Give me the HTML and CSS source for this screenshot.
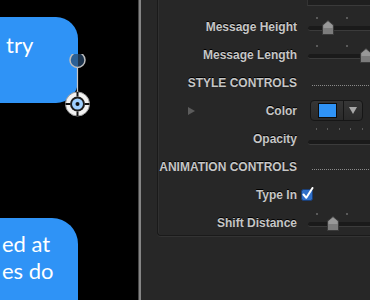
FILE: index.html
```html
<html lang="en">
<head>
  <meta charset="UTF-8">
  <title>Message Inspector</title>
  <link rel="stylesheet" href="styles.css">
</head>
<body>
  <div class="canvas">
    <div class="bubble bubble-top">
      <p>try</p>
    </div>
    <div class="bubble bubble-bottom">
      <p>ed at</p>
      <p>es do</p>
    </div>
    <svg class="handles" width="40" height="80" viewBox="0 0 40 80">
      <line x1="20.5" y1="14" x2="20.5" y2="40" stroke="#c8c8c8" stroke-width="1.2"/>
      <circle cx="20.5" cy="6" r="7.5" fill="#2a4a6e" fill-opacity="0.7" stroke="#bdbdbd" stroke-width="1.5"/>
      <circle cx="20.5" cy="50" r="12" fill="#f2f2f2" stroke="#9a9a9a" stroke-width="1"/>
      <circle cx="20.5" cy="50" r="7.5" fill="#1c1c1c"/>
      <circle cx="20.5" cy="50" r="5.5" fill="#9fd0ff"/>
      <circle cx="20.5" cy="50" r="2" fill="#111"/>
      <line x1="8.5" y1="50" x2="13" y2="50" stroke="#111" stroke-width="2"/>
      <line x1="28" y1="50" x2="32.5" y2="50" stroke="#111" stroke-width="2"/>
      <line x1="20.5" y1="38" x2="20.5" y2="42.5" stroke="#111" stroke-width="2"/>
      <line x1="20.5" y1="57.5" x2="20.5" y2="62" stroke="#111" stroke-width="2"/>
    </svg>
  </div>

  <div class="divider"></div>

  <div class="inspector">
    <div class="group">
      <div class="top-well"></div>

      <div class="row">
        <div class="label">Message Height</div>
        <div class="slider">
          <span class="tick" style="left: 15px"></span>
          <span class="tick" style="left: 45px"></span>
          <div class="track"></div>
          <svg class="thumb" style="left: 21px" width="12" height="15" viewBox="0 0 12 15"><path d="M6 0.5 L11.5 5 L11.5 14.5 L0.5 14.5 L0.5 5 Z" fill="#7c7c7c" stroke="#3a3a3a"/><path d="M6 1.5 L10.5 5.3 L10.5 8 L1.5 8 L1.5 5.3 Z" fill="#989898"/></svg>
        </div>
      </div>

      <div class="row">
        <div class="label">Message Length</div>
        <div class="slider">
          <span class="tick" style="left: 15px"></span>
          <span class="tick" style="left: 45px"></span>
          <div class="track"></div>
          <svg class="thumb" style="left: 59px" width="12" height="15" viewBox="0 0 12 15"><path d="M6 0.5 L11.5 5 L11.5 14.5 L0.5 14.5 L0.5 5 Z" fill="#7c7c7c" stroke="#3a3a3a"/><path d="M6 1.5 L10.5 5.3 L10.5 8 L1.5 8 L1.5 5.3 Z" fill="#989898"/></svg>
        </div>
      </div>

      <div class="row">
        <div class="label header">STYLE CONTROLS</div>
        <div class="dots"></div>
      </div>

      <div class="row">
        <div class="label"><span class="disclosure"></span>Color</div>
        <div class="color-control">
          <div class="well"><span class="swatch"></span></div>
          <div class="drop"><span class="arrow"></span></div>
        </div>
      </div>

      <div class="row">
        <div class="label">Opacity</div>
        <div class="slider">
          <span class="tick small" style="left: 15px"></span>
          <span class="tick small" style="left: 26px"></span>
          <span class="tick small" style="left: 38px"></span>
          <span class="tick small" style="left: 49px"></span>
          <span class="tick small" style="left: 61px"></span>
          <div class="track low"></div>
        </div>
      </div>

      <div class="row">
        <div class="label header">ANIMATION CONTROLS</div>
        <div class="dots"></div>
      </div>

      <div class="row">
        <div class="label">Type In</div>
        <div>
          <svg class="checkbox" width="13" height="14" viewBox="0 0 13 14">
            <rect x="0.5" y="2.5" width="11" height="11" rx="2" fill="#2f6fc8" stroke="#1a3f78"/>
            <path d="M2.5 7.5 L5.3 10.8 L11.5 1" fill="none" stroke="#ffffff" stroke-width="2" stroke-linecap="round" stroke-linejoin="round"/>
          </svg>
        </div>
      </div>

      <div class="row last">
        <div class="label">Shift Distance</div>
        <div class="slider">
          <span class="tick" style="left: 15px"></span>
          <span class="tick" style="left: 45px"></span>
          <div class="track"></div>
          <svg class="thumb" style="left: 26px" width="12" height="15" viewBox="0 0 12 15"><path d="M6 0.5 L11.5 5 L11.5 14.5 L0.5 14.5 L0.5 5 Z" fill="#7c7c7c" stroke="#3a3a3a"/><path d="M6 1.5 L10.5 5.3 L10.5 8 L1.5 8 L1.5 5.3 Z" fill="#989898"/></svg>
        </div>
      </div>
    </div>
  </div>
</body>
</html>
```

FILE: styles.css
```css
body {
  margin: 0;
  display: flex;
  height: 300px;
  overflow: hidden;
  background-color: #272727;
  font-family: "Liberation Sans", Arial, sans-serif;
}

.canvas {
  position: relative;
  width: 138px;
  height: 300px;
  background-color: #000;
  overflow: hidden;
  flex-shrink: 0;
}

.bubble {
  position: absolute;
  left: -120px;
  width: 198px;
  background-color: #2f93f6;
  color: #fff;
  font-family: Lato, "Open Sans", sans-serif;
  font-size: 22px;
  box-sizing: border-box;
  padding-left: 126px;
}

.bubble p {
  margin: 0;
  line-height: 27px;
}

.bubble-top {
  top: 17px;
  height: 86px;
  border-radius: 22px;
  padding-top: 14px;
}

.bubble-bottom {
  top: 218px;
  height: 120px;
  border-radius: 26px;
  padding-top: 12px;
  padding-left: 122px;
}

.handles {
  position: absolute;
  left: 57px;
  top: 54px;
}

.divider {
  width: 2px;
  flex-shrink: 0;
  border-left: 1px solid #474747;
  background-color: #858585;
}

.inspector {
  flex: 1;
  overflow: hidden;
}

.group {
  margin-left: 16px;
  border-left: 1px solid #1a1a1a;
  border-bottom: 1px solid #1a1a1a;
  box-shadow: inset 1px 0 0 #303030, 0 1px 0 #333;
  border-bottom-left-radius: 4px;
  padding-bottom: 0;
}

.top-well {
  margin-left: 149px;
  height: 5px;
  background-color: #1f1f1f;
  border-left: 1px solid #333;
  border-bottom: 1px solid #3a3a3a;
  margin-bottom: 7px;
}

.row {
  display: grid;
  grid-template-columns: 139px 1fr;
  column-gap: 4px;
  height: 28px;
  align-items: center;
}

.row.last {
  height: 26px;
}

.label {
  display: flex;
  align-items: center;
  justify-content: flex-end;
  color: #c6c6c6;
  font-size: 12px;
  font-weight: bold;
  text-shadow: 0 -1px 0 #000;
  white-space: nowrap;
}

.disclosure {
  margin-left: 30px;
  margin-right: auto;
  width: 0;
  height: 0;
  border-top: 4px solid transparent;
  border-bottom: 4px solid transparent;
  border-left: 7px solid #5c5c5c;
}

.slider {
  position: relative;
  height: 28px;
}

.tick {
  position: absolute;
  top: 4px;
  width: 2px;
  height: 2px;
  background-color: #5a5a5a;
}

.tick.small {
  top: 3px;
  width: 1px;
}

.track {
  position: absolute;
  left: 7px;
  right: -20px;
  top: 13px;
  height: 4px;
  background-color: #1a1a1a;
  border-radius: 3px;
  border-bottom: 1px solid #3b3b3b;
}

.track.low {
  top: 15px;
}

.thumb {
  position: absolute;
  top: 7px;
}

.dots {
  margin-left: 11px;
  margin-top: 4px;
  height: 1px;
  background-image: repeating-linear-gradient(to right, #8a8a8a 0 1px, transparent 1px 2px);
}

.color-control {
  display: flex;
  margin-left: 9px;
  margin-top: -2px;
  width: 53px;
  height: 21px;
  box-sizing: border-box;
  border: 1px solid #161616;
  border-radius: 4px;
  background: linear-gradient(#363636, #2a2a2a);
}

.well {
  width: 32px;
  display: flex;
  align-items: center;
  justify-content: center;
  border-right: 1px solid #161616;
}

.swatch {
  width: 17px;
  height: 13px;
  background-color: #2f93f6;
  border: 1px solid #0c0c0c;
}

.drop {
  flex: 1;
  display: flex;
  align-items: center;
  justify-content: center;
}

.arrow {
  width: 0;
  height: 0;
  border-left: 4px solid transparent;
  border-right: 4px solid transparent;
  border-top: 7px solid #a8a8a8;
}

.checkbox {
  display: block;
  margin-top: -3px;
}
```
